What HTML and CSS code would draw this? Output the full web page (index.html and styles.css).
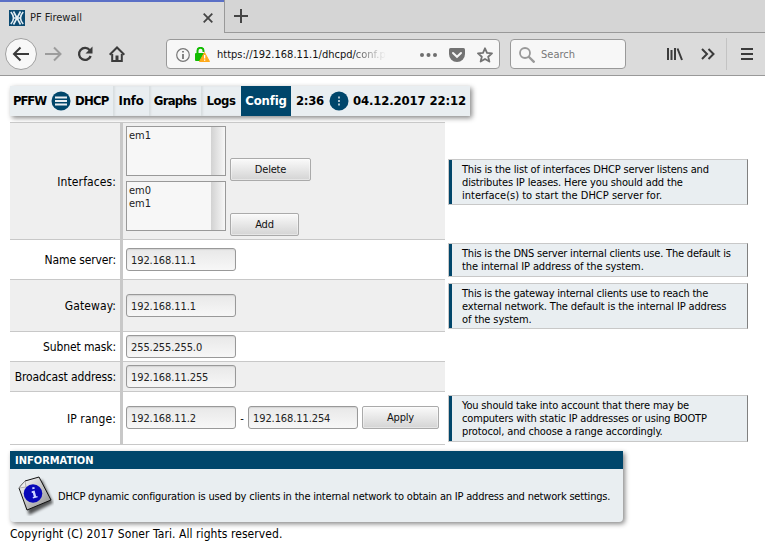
FILE: index.html
```html
<!DOCTYPE html>
<html lang="en">
<head>
<meta charset="utf-8">
<title>PF Firewall</title>
<link rel="stylesheet" href="styles.css">
</head>
<body>
<header class="browser">
  <div class="tabs">
    <div class="tab">
      <svg class="favicon" width="16" height="16" viewBox="0 0 16 16"><rect width="16" height="16" fill="#0b4a72"/><path d="M1.800 2Q4.500 5 4.500 8T1.800 14M14.200 2Q11.500 5 11.500 8t2.700 6M4.500 1.500l7 13M11.500 1.500l-7 13M4.500 8h7" fill="none" stroke="#e4eef4" stroke-width="1.600"/></svg>
      <span class="tab-title">PF Firewall</span>
      <svg width="10" height="10" viewBox="0 0 10 10"><path d="M.7.700l8.600 8.600M9.300.700L.7 9.300" stroke="#444" stroke-width="1.800"/></svg>
    </div>
    <div class="strip"><svg width="14" height="14" viewBox="0 0 14 14"><path d="M7 0v14M0 7h14" stroke="#444" stroke-width="2"/></svg></div>
  </div>
  <div class="toolbar">
    <div class="back"><svg width="18" height="16" viewBox="0 0 18 16"><path d="M17 8H2M8.500 1.500L2 8l6.500 6.500" fill="none" stroke="#3b3b3b" stroke-width="2"/></svg></div>
    <svg class="forward" width="17" height="16" viewBox="0 0 17 16"><path d="M0 8h15M9 1.500L15.500 8 9 14.500" fill="none" stroke="#9c9c9c" stroke-width="2"/></svg>
    <svg class="reload" width="16" height="16" viewBox="0 0 16 16"><path d="M12.800 4.200A6 6 0 1 0 13.700 10" fill="none" stroke="#3b3b3b" stroke-width="2.300"/><path d="M15.500.500v7h-7z" fill="#3b3b3b"/></svg>
    <svg class="home" width="16" height="16" viewBox="0 0 16 16"><path d="M.7 8.700L8 1.500l7.300 7.200" fill="none" stroke="#3b3b3b" stroke-width="2"/><path d="M3.200 8v7h9.600V8" fill="none" stroke="#3b3b3b" stroke-width="2"/><path d="M6.500 15V9.500h3V15z" fill="#3b3b3b"/></svg>
    <div class="urlbar">
      <svg class="info-icon" width="14" height="14" viewBox="0 0 14 14"><circle cx="7" cy="7" r="6.300" fill="none" stroke="#777" stroke-width="1.200"/><path d="M6.100 3h1.800v1.600H6.100zM6.100 6h1.800v5H6.100z" fill="#777"/></svg>
      <svg class="lock" width="15" height="15" viewBox="0 0 15 15"><path d="M2.500 7V3.800a3 3 0 0 1 6 0V5" fill="none" stroke="#12bc00" stroke-width="2"/><rect y="6" width="10" height="8" rx="1" fill="#12bc00"/><path d="M9.500 5.500l5 9h-10z" fill="#ffa91a" stroke="#ffa91a" stroke-linejoin="round"/><path d="M9 8h1.300v3.500H9zM9 12.500h1.300v1.300H9z" fill="#fff"/></svg>
      <span class="url">https://192.168.11.1/dhcpd/<i>conf.p</i></span>
      <svg class="dots" width="17" height="4" viewBox="0 0 17 4"><g fill="#6e6e6e"><circle cx="2" cy="2" r="2"/><circle cx="8.500" cy="2" r="2"/><circle cx="15" cy="2" r="2"/></g></svg>
      <svg class="pocket" width="16" height="14" viewBox="0 0 16 14"><path d="M1.500 0h13Q16 0 16 1.500V6a8 8 0 0 1-16 0V1.500Q0 0 1.500 0z" fill="#737373"/><path d="M4 5l4 3.800L12 5" fill="none" stroke="#f7f7f7" stroke-width="2" stroke-linecap="round"/></svg>
      <svg width="16" height="16" viewBox="0 0 16 16"><path d="M8 1.300l2 4.600 5 .5-3.800 3.300 1.200 4.900L8 12l-4.400 2.600 1.200-4.900L1 6.400l5-.5z" fill="none" stroke="#737373" stroke-width="1.800" stroke-linejoin="round"/></svg>
    </div>
    <div class="search">
      <svg width="16" height="16" viewBox="0 0 16 16"><circle cx="6" cy="6" r="5" fill="none" stroke="#999" stroke-width="1.800"/><path d="M9.500 9.500l6 6" stroke="#999" stroke-width="2.400"/></svg>
      <span>Search</span>
    </div>
    <svg class="library" width="16" height="14" viewBox="0 0 16 14"><path d="M1 1v12M4.500 3v10M8 1v12M10.500 1.500l4.500 11.500" stroke="#3b3b3b" stroke-width="2"/></svg>
    <svg class="more" width="14" height="12" viewBox="0 0 14 12"><path d="M1 1l5 5-5 5M7.500 1l5 5-5 5" fill="none" stroke="#3b3b3b" stroke-width="2"/></svg>
    <span class="divider"></span>
    <svg class="burger" width="12" height="12" viewBox="0 0 12 12"><path d="M0 1h12M0 6h12M0 11h12" stroke="#3b3b3b" stroke-width="2"/></svg>
  </div>
</header>
<main>
  <nav class="menu">
    <div class="item brand"><span class="t1">PFFW</span><svg width="20" height="20" viewBox="0 0 20 20"><circle cx="10" cy="10" r="9.500" fill="#00466b"/><path d="M4 6.500h12M4 10h12M4 13.500h12" stroke="#e9eef2" stroke-width="1.800"/></svg><span class="t2">DHCP</span></div>
    <div class="item info">Info</div>
    <div class="item graphs">Graphs</div>
    <div class="item logs">Logs</div>
    <div class="item active">Config</div>
    <div class="clock"><span class="t3">2:36</span><svg width="20" height="20" viewBox="0 0 20 20"><circle cx="10" cy="10" r="9.500" fill="#00466b"/><path d="M9 5.500h2v2H9zM9 9h2v2H9zM9 12.500h2v2H9z" fill="#a9c0cd"/></svg><span class="t4">04.12.2017 22:12</span></div>
  </nav>
  <section class="form">
    <div class="row r1 odd"><div class="label"><span>Interfaces:</span></div>
      <div class="cell lists">
        <div class="line"><div class="listbox"><div>em1</div></div><button class="btn delete">Delete</button></div>
        <div class="line"><div class="listbox"><div>em0<br>em1</div></div><button class="btn add">Add</button></div>
      </div>
      <div class="helpcell"><p class="help h1"><span class="snug">This is the list of interfaces DHCP server listens and</span><span class="close">distributes IP leases. Here you should add the</span><span>interface(s) to start the DHCP server for.</span></p></div></div>
    <div class="row r2"><div class="label"><span>Name server:</span></div><div class="cell"><div class="input">192.168.11.1</div></div>
      <div class="helpcell"><p class="help h2"><span class="tight">This is the DNS server internal clients use. The default is</span><span class="near">the internal IP address of the system.</span></p></div></div>
    <div class="row r3 odd"><div class="label wide"><span>Gateway:</span></div><div class="cell"><div class="input">192.168.11.1</div></div>
      <div class="helpcell"><p class="help h3"><span class="tight">This is the gateway internal clients use to reach the</span><span class="close">external network. The default is the internal IP address</span><span class="near">of the system.</span></p></div></div>
    <div class="row r4"><div class="label"><span>Subnet mask:</span></div><div class="cell"><div class="input">255.255.255.0</div></div></div>
    <div class="row r5 odd"><div class="label"><span>Broadcast address:</span></div><div class="cell"><div class="input">192.168.11.255</div></div></div>
    <div class="row r6"><div class="label wide"><span>IP range:</span></div><div class="cell"><div class="input">192.168.11.2</div><span class="dash">-</span><div class="input">192.168.11.254</div><button class="btn apply">Apply</button></div>
      <div class="helpcell"><p class="help h4"><span class="snug">You should take into account that there may be</span><span class="snug">computers with static IP addresses or using BOOTP</span><span class="close">protocol, and choose a range accordingly.</span></p></div></div>
  </section>
  <section class="notice">
    <h2>INFORMATION</h2>
    <div class="notice-body">
      <svg width="36" height="40" viewBox="0 0 36 40"><defs><filter id="s"><feGaussianBlur stdDeviation="1.500"/></filter><linearGradient id="p" x2="1" y2="1"><stop stop-color="#fff"/><stop offset="1" stop-color="#8b8b8b"/></linearGradient></defs><path d="M4 10L24 4l11 23-24 12z" fill="#000" opacity=".65" filter="url(#s)"/><path d="M7 5L21 1l12 23L9 34 1 12z" fill="url(#p)" stroke="#111"/><path d="M7 5l1 6-7 1z" fill="#eee" stroke="#888" stroke-width=".6"/><circle cx="15" cy="17.500" r="9.300" fill="#0808b8"/><path d="M14 11.500l2.300-.6.500 1.800-2.300.6zM13.600 15.300l3-.9 1.500 5.800 1.300-.3.300 1.300-4.700 1.300-.4-1.300 1.200-.4-1-3.900-1 .2z" fill="#cdd5ff"/></svg>
      <span class="msg">DHCP dynamic configuration is used by clients in the internal network to obtain an IP address and network settings.</span>
    </div>
  </section>
  <footer><span class="copy">Copyright (C) 2017 Soner Tari. All rights reserved.</span></footer>
</main>
</body>
</html>
```
FILE: styles.css
```css
* { box-sizing: border-box; }
body { margin: 0; width: 765px; height: 550px; overflow: hidden; background: #fff; color: #000; font: 11px/13px "DejaVu Sans Condensed", "DejaVu Sans", sans-serif; }
svg { display: block; flex: none; }
span { white-space: nowrap; }
.browser { height: 76px; background: #dbdbdb; border-bottom: 1px solid #999; }
.tabs { display: flex; height: 33px; }
.tab { width: 224px; border-top: 2px solid #5b70c6; display: flex; align-items: center; padding: 0 11px 0 9px; }
.tab-title { flex: 1; padding-left: 5px; color: #222; }
.strip { flex: 1; background: #d5d5d5; border-left: 1px solid #999; border-bottom: 1px solid #999; padding: 9px 0 0 9px; }
.toolbar { display: flex; height: 42px; align-items: center; }
.back { width: 32px; height: 32px; margin-left: 5px; border-radius: 50%; border: 1px solid #a0a0a0; background: #f8f8f8; display: flex; align-items: center; justify-content: center; }
.forward { margin-left: 8px; }
.reload { margin-left: 15px; }
.home { margin-left: 16px; }
.urlbar, .search { height: 30px; background: #f7f7f7; border: 1px solid #999; border-radius: 4px; display: flex; align-items: center; padding-top: 1px; }
.urlbar { width: 334px; margin-left: 41px; padding-left: 9px; }
.lock { margin-left: 5px; }
.url { width: 172px; margin-left: 7px; color: #111; overflow: hidden; }
.url i { font-style: normal; color: transparent; background: linear-gradient(90deg, #444, #f7f7f7); background-clip: text; -webkit-background-clip: text; }
.dots { margin-left: 31px; }
.pocket { margin: 0 12px; }
.search { width: 116px; margin-left: 10px; padding-left: 8px; gap: 6px; color: #777; }
.library { margin-left: 41px; }
.more { margin-left: 18px; }
.divider { width: 1px; height: 32px; margin-left: 11px; background: #c3c3c3; }
.burger { margin-left: 14px; }
main { padding: 10px 10px 0; }
.menu { display: flex; width: 460px; height: 30px; background: #e9eef1; box-shadow: 2px 2px 5px #888; font-weight: bold; font-size: 13px; line-height: 30px; }
.item { text-align: center; box-shadow: inset 2px 0 2px #d9dee0; }
.brand { width: 103px; display: flex; align-items: center; padding-left: 3px; box-shadow: none; }
.t1 { width: 38px; letter-spacing: -1.1px; text-align: left; }
.t2 { margin-left: 4px; letter-spacing: -.8px; }
.info { width: 36px; letter-spacing: -.2px; }
.graphs { width: 52px; letter-spacing: -.75px; }
.logs { width: 40px; letter-spacing: -.45px; }
.active { width: 50px; background: #00466b; color: #fff; box-shadow: none; letter-spacing: -.15px; }
.clock { flex: 1; display: flex; align-items: center; padding-left: 5px; }
.t3 { width: 33px; letter-spacing: -.3px; }
.t4 { margin-left: 4px; letter-spacing: -.15px; }
.form { margin-top: 6px; width: 738px; }
.row { display: grid; grid-template-columns: 110px 3px 322px 303px; }
.label { grid-column: 1; border-top: 1px solid #c8c8c8; display: flex; align-items: center; justify-content: flex-end; padding: 2px 4px 0 0; font-size: 12px; letter-spacing: -.12px; }
.r1 .label, .wide { letter-spacing: .1px; }
.cell { grid-column: 2 / 4; border-left: 3px solid #c8c8c8; border-top: 1px solid #c8c8c8; display: flex; align-items: center; padding: 0 6px 0 3px; }
.odd .label, .odd .cell { background: #efefef; }
.r1 { height: 117px; }
.r2 { height: 40px; }
.r3 { height: 52px; }
.r4, .r5 { height: 30px; }
.r6 { height: 54px; }
.r6 .label, .r6 .cell { border-bottom: 1px solid #c8c8c8; }
.r6 .input, .r6 .btn { margin-top: -1px; }
.lists { flex-direction: column; align-items: flex-start; gap: 5px; padding-top: 3px; }
.line { display: flex; gap: 4px; align-items: flex-end; height: 50px; }
.listbox { width: 100px; height: 50px; border: 1px solid #999; background: linear-gradient(90deg, #d2d2d2, #f7f7f7) right / 14px 100% no-repeat #f7f7f7; padding: 2px; color: #222; }
.btn { height: 23px; border: 1px solid #aaa; border-radius: 2px; background: linear-gradient(#fafafa, #d4d4d4); font: inherit; color: #111; padding: 0; letter-spacing: -.2px; box-shadow: inset 0 0 0 1px #ffffff66; }
.line .btn { margin-bottom: -5px; }
.delete { width: 81px; }
.add { width: 69px; }
.apply { width: 77px; margin-left: 4px; }
.input { width: 110px; height: 23px; border: 1px solid #999; border-radius: 3px; background: linear-gradient(#e8e8e8, #f7f7f7); padding: 5px 4px 0; color: #222; letter-spacing: -.1px; box-shadow: inset 0 1px 1px #d4d4d4; }
.dash { width: 12px; text-align: center; }
.helpcell { grid-column: 4; padding-left: 3px; }
.help { margin: 0; width: 300px; border: 1px solid #c8c8c8; border-right-color: #808080; background: linear-gradient(#00466b, #00466b) left / 3px 100% no-repeat #e9eef1; padding: 3px 0 0 13px; }
.help span { display: block; width: max-content; }
.near { letter-spacing: -.1px; }
.close { letter-spacing: -.14px; }
.snug { letter-spacing: -.17px; }
.tight { letter-spacing: -.2px; }
.h1 { height: 46px; margin-top: 37px; }
.h2 { height: 34px; margin-top: 4px; }
.h3 { height: 46px; margin-top: 4px; }
.h4 { height: 47px; margin-top: 4px; }
.notice { margin-top: 6px; width: 613px; height: 71px; background: #e9eef1; border-radius: 0 0 4px 4px; box-shadow: 2px 2px 5px #888; }
h2 { margin: 0; height: 18px; background: #00466b; color: #fff; font-size: 11px; line-height: 19px; padding-left: 5px; }
.notice-body { display: flex; align-items: center; height: 53px; padding-left: 8px; gap: 4px; }
.msg { letter-spacing: -.196px; padding-top: 1px; }
footer { font-size: 12px; line-height: 14px; margin-top: 5px; letter-spacing: .07px; }
```
